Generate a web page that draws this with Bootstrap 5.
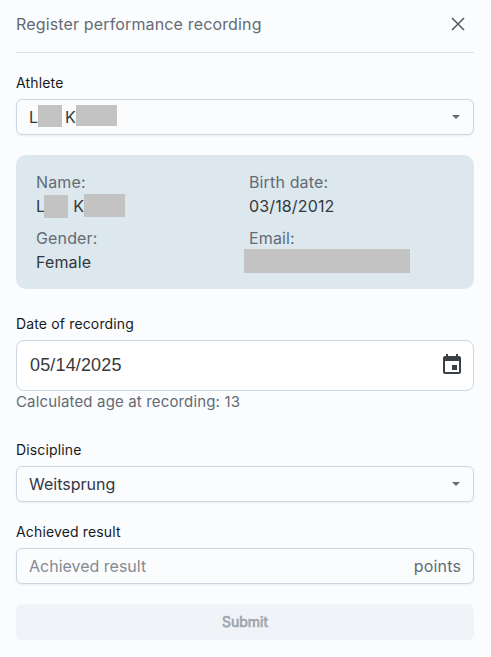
<!DOCTYPE html>
<html lang="en">
<head>
<meta charset="utf-8">
<meta name="viewport" content="width=device-width, initial-scale=1">
<title>Register performance recording</title>
<link href="https://cdn.jsdelivr.net/npm/bootstrap@5.3.0/dist/css/bootstrap.min.css" rel="stylesheet">
<style>
body { background: #fbfcfe; font-family: Inter, "Liberation Sans", sans-serif; font-size: 16px; line-height: 24px; color: #32383e; }
.sheet { width: 491px; height: 657px; padding: 0 17px 0 16px; overflow: hidden; }
.sheet-head { height: 53px; padding: 0 7.5px 4px 0; border-bottom: 1px solid #dde1e5; color: #636b74; letter-spacing: .15px; }
.sheet-head svg { margin-top: -1px; }
.field-label { font-size: 14px; line-height: 21px; color: #171a1c; margin-bottom: 6px; letter-spacing: .15px; }
.label-athlete { margin-top: 19px; }
.label-date { margin-top: 24px; }
.label-discipline { margin-top: 26px; }
.label-result { margin-top: 19px; }
.field-box { height: 36px; border: 1px solid #cdd7e1; border-radius: 6px; padding: 0 12px; background: #fbfcfe; box-shadow: 0 1px 2px rgba(21,21,21,.08); }
.date-box { height: 51px; border: 1px solid #cdd7e1; border-radius: 8px; padding: 0 9px 2px 13px; background: #fff; }
.date-text { font-family: "Liberation Sans", Arial, sans-serif; font-size: 18px; letter-spacing: .15px; color: #3a3a3a; }
.muted { color: #636b74; }
.unit { letter-spacing: .15px; }
.helper-text { font-size: 15px; line-height: 22px; letter-spacing: .15px; }
.hint { color: #858a90; }
.redact { display: inline-block; background: #c3c3c3; }
.redact-first { width: 24px; height: 22px; margin-top: -2px; }
.redact-last { width: 41px; height: 21px; margin: -3px 0 0; }
.info .redact-first { height: 23px; margin: 0 5px 0 -1px; }
.info .redact-last { height: 23px; margin-top: -2px; }
.redact-email { width: 166px; height: 24px; margin: -1px 0 0 -5px; }
.initial { margin-left: 3px; }
.info { height: 134px; padding: 15px 20px; margin-top: 20px; border-radius: 10px; background: #dde7ee; letter-spacing: .14px; }
.info .row { --bs-gutter-x: 0; row-gap: 8px; }
.info .col-6 { height: 48px; }
.info .col-6:nth-child(even) { padding-left: 4px; }
.submit-btn { height: 36px; margin-top: 20px; padding: 0 0 1px; border: 0; border-radius: 6px; font-size: 14px; font-weight: 400; line-height: 21px; -webkit-text-stroke: .7px #9fa6ad; }
.submit-btn:disabled { background: #f0f4f8; color: #9fa6ad; opacity: 1; }
</style>
</head>
<body>
<main class="sheet">
  <header class="sheet-head d-flex align-items-center justify-content-between">
    <span class="title-text">Register performance recording</span>
    <svg width="18" height="18" viewBox="0 0 18 18" stroke="#555e68" stroke-width="1.6" fill="none" aria-label="Close"><path d="M3 3 15 15M15 3 3 15"/></svg>
  </header>

  <div class="field-label label-athlete">Athlete</div>
  <div class="field-box d-flex align-items-center">
    <span>L</span><span class="redact redact-first"></span>
    <span class="initial">K</span><span class="redact redact-last"></span>
    <svg class="ms-auto" width="10" height="5" viewBox="0 0 10 5" fill="#636b74"><path d="M1 0h8L5 4z"/></svg>
  </div>

  <section class="info">
    <div class="row">
      <div class="col-6"><div class="muted">Name:</div>
        <div class="d-flex align-items-center"><span>L</span><span class="redact redact-first"></span><span>K</span><span class="redact redact-last"></span></div></div>
      <div class="col-6"><div class="muted">Birth date:</div><div>03/18/2012</div></div>
      <div class="col-6"><div class="muted">Gender:</div><div>Female</div></div>
      <div class="col-6"><div class="muted">Email:</div><div class="redact redact-email"></div></div>
    </div>
  </section>

  <div class="field-label label-date">Date of recording</div>
  <div class="date-box d-flex align-items-center justify-content-between">
    <span class="date-text">05/14/2025</span>
    <svg width="24" height="24" viewBox="0 0 24 24" fill="#3b4045"><path d="M17 12h-5v5h5v-5zM16 1v2H8V1H6v2H5c-1.110 0-1.990.9-1.990 2L3 19c0 1.100.89 2 2 2h14c1.100 0 2-.9 2-2V5c0-1.100-.9-2-2-2h-1V1h-2zm3 18H5V8h14v11z"/></svg>
  </div>
  <div class="muted helper-text">Calculated age at recording: 13</div>

  <div class="field-label label-discipline">Discipline</div>
  <div class="field-box d-flex align-items-center justify-content-between">
    <span>Weitsprung</span>
    <svg width="10" height="5" viewBox="0 0 10 5" fill="#636b74"><path d="M1 0h8L5 4z"/></svg>
  </div>

  <div class="field-label label-result">Achieved result</div>
  <div class="field-box d-flex align-items-center justify-content-between">
    <span class="hint">Achieved result</span><span class="muted unit">points</span>
  </div>

  <button class="submit-btn btn w-100" disabled>Submit</button>
</main>
<script src="https://cdn.jsdelivr.net/npm/bootstrap@5.3.0/dist/js/bootstrap.bundle.min.js"></script>
</body>
</html>
